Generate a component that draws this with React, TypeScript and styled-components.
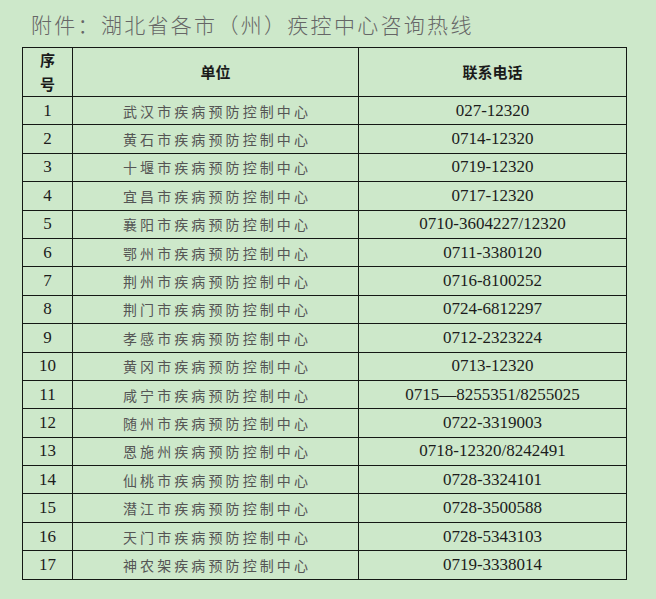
import styled, { createGlobalStyle } from "styled-components";

const GlobalStyle = createGlobalStyle`
  html, body {
    margin: 0;
    padding: 0;
    background: #cde8ca;
  }
`;

const rows: [string, string][] = [
  ["武汉市疾病预防控制中心", "027-12320"],
  ["黄石市疾病预防控制中心", "0714-12320"],
  ["十堰市疾病预防控制中心", "0719-12320"],
  ["宜昌市疾病预防控制中心", "0717-12320"],
  ["襄阳市疾病预防控制中心", "0710-3604227/12320"],
  ["鄂州市疾病预防控制中心", "0711-3380120"],
  ["荆州市疾病预防控制中心", "0716-8100252"],
  ["荆门市疾病预防控制中心", "0724-6812297"],
  ["孝感市疾病预防控制中心", "0712-2323224"],
  ["黄冈市疾病预防控制中心", "0713-12320"],
  ["咸宁市疾病预防控制中心", "0715—8255351/8255025"],
  ["随州市疾病预防控制中心", "0722-3319003"],
  ["恩施州疾病预防控制中心", "0718-12320/8242491"],
  ["仙桃市疾病预防控制中心", "0728-3324101"],
  ["潜江市疾病预防控制中心", "0728-3500588"],
  ["天门市疾病预防控制中心", "0728-5343103"],
  ["神农架疾病预防控制中心", "0719-3338014"],
];

export default function App() {
  return (
    <Page>
      <GlobalStyle />
      <Title>附件：湖北省各市（州）疾控中心咨询热线</Title>
      <Table>
        <colgroup>
          <col style={{ width: 50 }} />
          <col style={{ width: 286 }} />
          <col style={{ width: 268 }} />
        </colgroup>
        <thead>
          <tr>
            <HeadCell>
              序<br />号
            </HeadCell>
            <HeadCell>单位</HeadCell>
            <HeadCell>联系电话</HeadCell>
          </tr>
        </thead>
        <tbody>
          {rows.map(([name, phone], i) => (
            <Row key={name}>
              <NumCell>{i + 1}</NumCell>
              <NameCell>{name}</NameCell>
              <NumCell>{phone}</NumCell>
            </Row>
          ))}
        </tbody>
      </Table>
    </Page>
  );
}

const Page = styled.div`
  width: 656px;
  height: 599px;
  padding: 11px 0 0 0;
  box-sizing: border-box;
  overflow: hidden;
`;

const Title = styled.h1`
  margin: 0 0 0 31px;
  font-family: "Noto Sans CJK SC", sans-serif;
  font-weight: 300;
  font-size: 21px;
  line-height: 26px;
  letter-spacing: 2.3px;
  color: #666;
  white-space: nowrap;
`;

const Table = styled.table`
  margin: 10px 0 0 22px;
  width: 604px;
  border-collapse: collapse;
  table-layout: fixed;
  td,
  th {
    border: 1.5px solid #141814;
    padding: 0;
    text-align: center;
    vertical-align: middle;
  }
`;

const HeadCell = styled.th`
  height: 41px;
  font-family: "Noto Sans CJK SC", sans-serif;
  font-weight: 700;
  font-size: 15px;
  line-height: 24px;
  color: #1a1a1a;
`;

const Row = styled.tr`
  height: 28.4px;
`;

const NumCell = styled.td`
  font-family: "Liberation Serif", "Times New Roman", serif;
  font-size: 17px;
  color: #1c1c1c;
  white-space: nowrap;
`;

const NameCell = styled.td`
  font-family: "Noto Sans CJK SC", sans-serif;
  font-weight: 400;
  font-size: 14px;
  letter-spacing: 3.1px;
  color: #555;
  white-space: nowrap;
  padding-left: 3px !important;
`;
